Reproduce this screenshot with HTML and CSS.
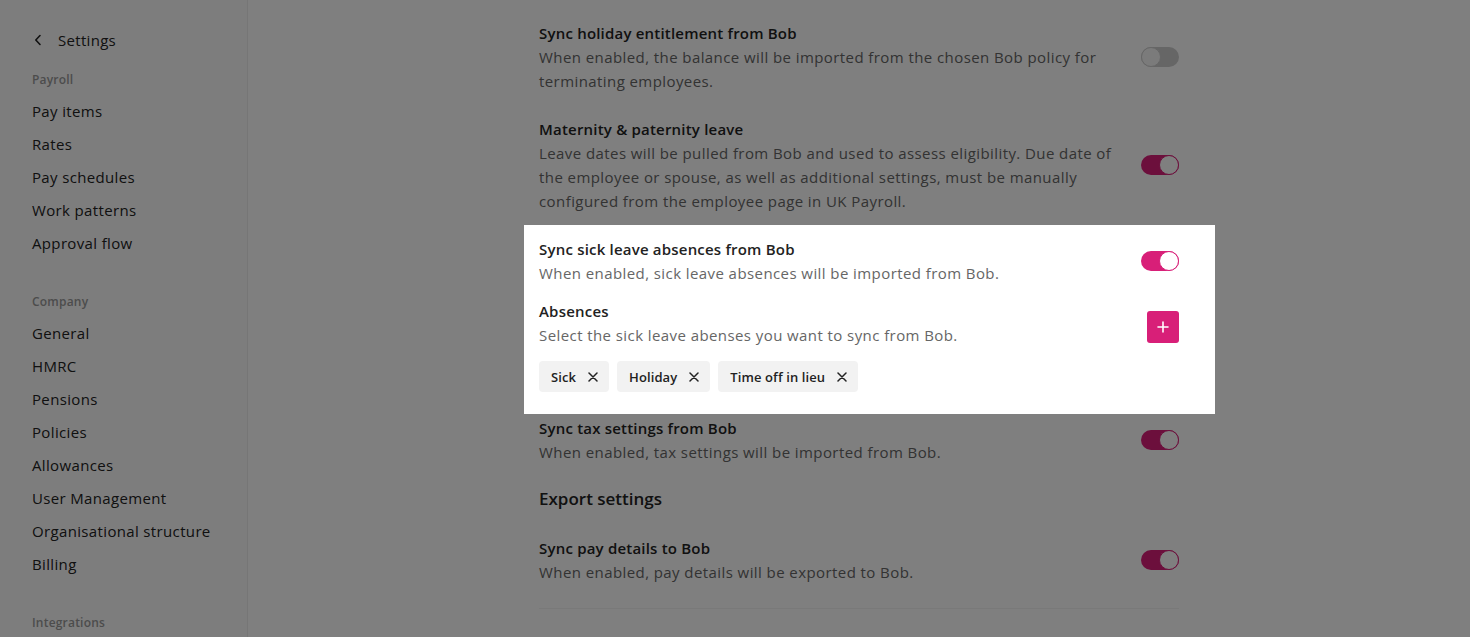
FILE: index.html
```html
<!DOCTYPE html>
<html lang="en">
<head>
<meta charset="utf-8">
<title>Settings</title>
<link rel="stylesheet" href="styles.css">
</head>
<body>
<div class="app">
  <aside class="sidebar">
    <div class="back">
      <svg class="chev" width="8" height="12" viewBox="0 0 8 12"><path d="M6 1.5 L1.8 6 L6 10.5" fill="none" stroke="#222" stroke-width="1.6" stroke-linecap="round" stroke-linejoin="round"/></svg>
      <span>Settings</span>
    </div>
    <div class="group">
      <div class="group-label">Payroll</div>
      <a class="nav-item">Pay items</a>
      <a class="nav-item">Rates</a>
      <a class="nav-item">Pay schedules</a>
      <a class="nav-item">Work patterns</a>
      <a class="nav-item">Approval flow</a>
    </div>
    <div class="group">
      <div class="group-label">Company</div>
      <a class="nav-item">General</a>
      <a class="nav-item">HMRC</a>
      <a class="nav-item">Pensions</a>
      <a class="nav-item">Policies</a>
      <a class="nav-item">Allowances</a>
      <a class="nav-item">User Management</a>
      <a class="nav-item">Organisational structure</a>
      <a class="nav-item">Billing</a>
    </div>
    <div class="group">
      <div class="group-label">Integrations</div>
    </div>
  </aside>
  <main class="main">
    <div class="column">
      <div class="row">
        <div class="text">
          <div class="title">Sync holiday entitlement from Bob</div>
          <div class="desc">When enabled, the balance will be imported from the chosen Bob policy for terminating employees.</div>
        </div>
        <span class="toggle off"><span class="knob"></span></span>
      </div>
      <div class="row">
        <div class="text">
          <div class="title">Maternity &amp; paternity leave</div>
          <div class="desc">Leave dates will be pulled from Bob and used to assess eligibility. Due date of the employee or spouse, as well as additional settings, must be manually configured from the employee page in UK Payroll.</div>
        </div>
        <span class="toggle on"><span class="knob"></span></span>
      </div>
      <section class="spotlight">
        <div class="row">
          <div class="text">
            <div class="title">Sync sick leave absences from Bob</div>
            <div class="desc">When enabled, sick leave absences will be imported from Bob.</div>
          </div>
          <span class="toggle on"><span class="knob"></span></span>
        </div>
        <div class="row sub">
          <div class="text">
            <div class="title">Absences</div>
            <div class="desc">Select the sick leave abenses you want to sync from Bob.</div>
          </div>
          <button class="add-btn" aria-label="Add">
            <svg width="12" height="12" viewBox="0 0 12 12"><path d="M6 1v10M1 6h10" stroke="#fff" stroke-width="1.6" stroke-linecap="round"/></svg>
          </button>
        </div>
        <div class="chips">
          <span class="chip">Sick<svg width="10" height="10" viewBox="0 0 10 10"><path d="M1 1l8 8M9 1l-8 8" stroke="#222" stroke-width="1.5" stroke-linecap="round"/></svg></span>
          <span class="chip">Holiday<svg width="10" height="10" viewBox="0 0 10 10"><path d="M1 1l8 8M9 1l-8 8" stroke="#222" stroke-width="1.5" stroke-linecap="round"/></svg></span>
          <span class="chip">Time off in lieu<svg width="10" height="10" viewBox="0 0 10 10"><path d="M1 1l8 8M9 1l-8 8" stroke="#222" stroke-width="1.5" stroke-linecap="round"/></svg></span>
        </div>
      </section>
      <div class="row">
        <div class="text">
          <div class="title">Sync tax settings from Bob</div>
          <div class="desc">When enabled, tax settings will be imported from Bob.</div>
        </div>
        <span class="toggle on"><span class="knob"></span></span>
      </div>
      <h2 class="section-title">Export settings</h2>
      <div class="row">
        <div class="text">
          <div class="title">Sync pay details to Bob</div>
          <div class="desc">When enabled, pay details will be exported to Bob.</div>
        </div>
        <span class="toggle on"><span class="knob"></span></span>
      </div>
      <hr class="divider">
    </div>
  </main>
</div>
</body>
</html>
```
FILE: styles.css
```css
* { box-sizing: border-box; }
html, body { margin: 0; height: 100%; }
body {
  font-family: "Open Sans", "Liberation Sans", sans-serif;
  color: #222;
  background: #fff;
  overflow: hidden;
}
.app {
  display: flex;
  height: 100vh;
}
.sidebar {
  width: 248px;
  flex: none;
  background: #fbfbfb;
  border-right: 1px solid #ececec;
  padding: 28px 0 0 32px;
}
.back {
  display: flex;
  align-items: center;
  gap: 16px;
  padding-left: 2px;
  height: 24px;
  font-size: 15px;
  letter-spacing: 0.3px;
  color: #222;
}
.group {
  margin-top: 16px;
}
.group + .group { margin-top: 30px; }
.group-label {
  font-size: 12px;
  font-weight: 600;
  color: #999;
  line-height: 24px;
  letter-spacing: 0.2px;
  margin-bottom: 3px;
}
.nav-item {
  display: block;
  font-size: 15px;
  line-height: 33px;
  letter-spacing: 0.35px;
  color: #222;
}
.main {
  flex: 1;
  min-width: 0;
}
.column {
  width: 640px;
  margin: 0 auto;
  padding-top: 21px;
  display: flex;
  flex-direction: column;
}
.row {
  display: flex;
  align-items: center;
  justify-content: space-between;
  gap: 24px;
}
.column > .row + .row,
.column > .spotlight + .row { margin-top: 24px; }
.text { flex: 1; min-width: 0; }
.title {
  font-size: 15px;
  font-weight: 600;
  line-height: 24px;
  letter-spacing: 0.2px;
  color: #222;
}
.desc {
  font-size: 15px;
  line-height: 24px;
  letter-spacing: 0.42px;
  color: #666;
  max-width: 580px;
}
.toggle {
  flex: none;
  width: 38px;
  height: 20px;
  border-radius: 10px;
  display: flex;
  align-items: center;
}
.toggle.on {
  background: #d81f78;
  justify-content: flex-end;
}
.toggle.off {
  background: #cdcdcd;
  justify-content: flex-start;
}
.knob {
  width: 20px;
  height: 20px;
  border-radius: 50%;
  background: #fff;
  border: 1px solid #d81f78;
}
.toggle.off .knob {
  background: #f7f7f7;
  border-color: #cdcdcd;
}
.spotlight {
  position: relative;
  z-index: 5;
  background: #fff;
  margin: 12px -36px -22px -15px;
  padding: 12px 36px 22px 15px;
  box-shadow: 0 0 0 3000px rgba(0, 0, 0, 0.5);
}
.row.sub { margin-top: 14px; align-items: flex-start; }
.add-btn {
  flex: none;
  width: 32px;
  height: 32px;
  margin-top: 12px;
  border: 0;
  border-radius: 3px;
  background: #d81f78;
  display: flex;
  align-items: center;
  justify-content: center;
  padding: 0;
}
.chips {
  display: flex;
  gap: 8px;
  margin-top: 14px;
}
.chip {
  display: flex;
  align-items: center;
  gap: 12px;
  height: 31px;
  padding: 0 11px 0 12px;
  background: #f2f2f2;
  border-radius: 4px;
  font-size: 13px;
  font-weight: 600;
  letter-spacing: 0.1px;
  color: #222;
}
.section-title {
  margin: 23px 0 0;
  font-size: 17px;
  font-weight: 600;
  line-height: 24px;
  color: #222;
}
.section-title + .row { margin-top: 25px; }
.divider {
  margin: 24px 0 0;
  border: 0;
  border-top: 1px solid #f2f2f2;
}
```
